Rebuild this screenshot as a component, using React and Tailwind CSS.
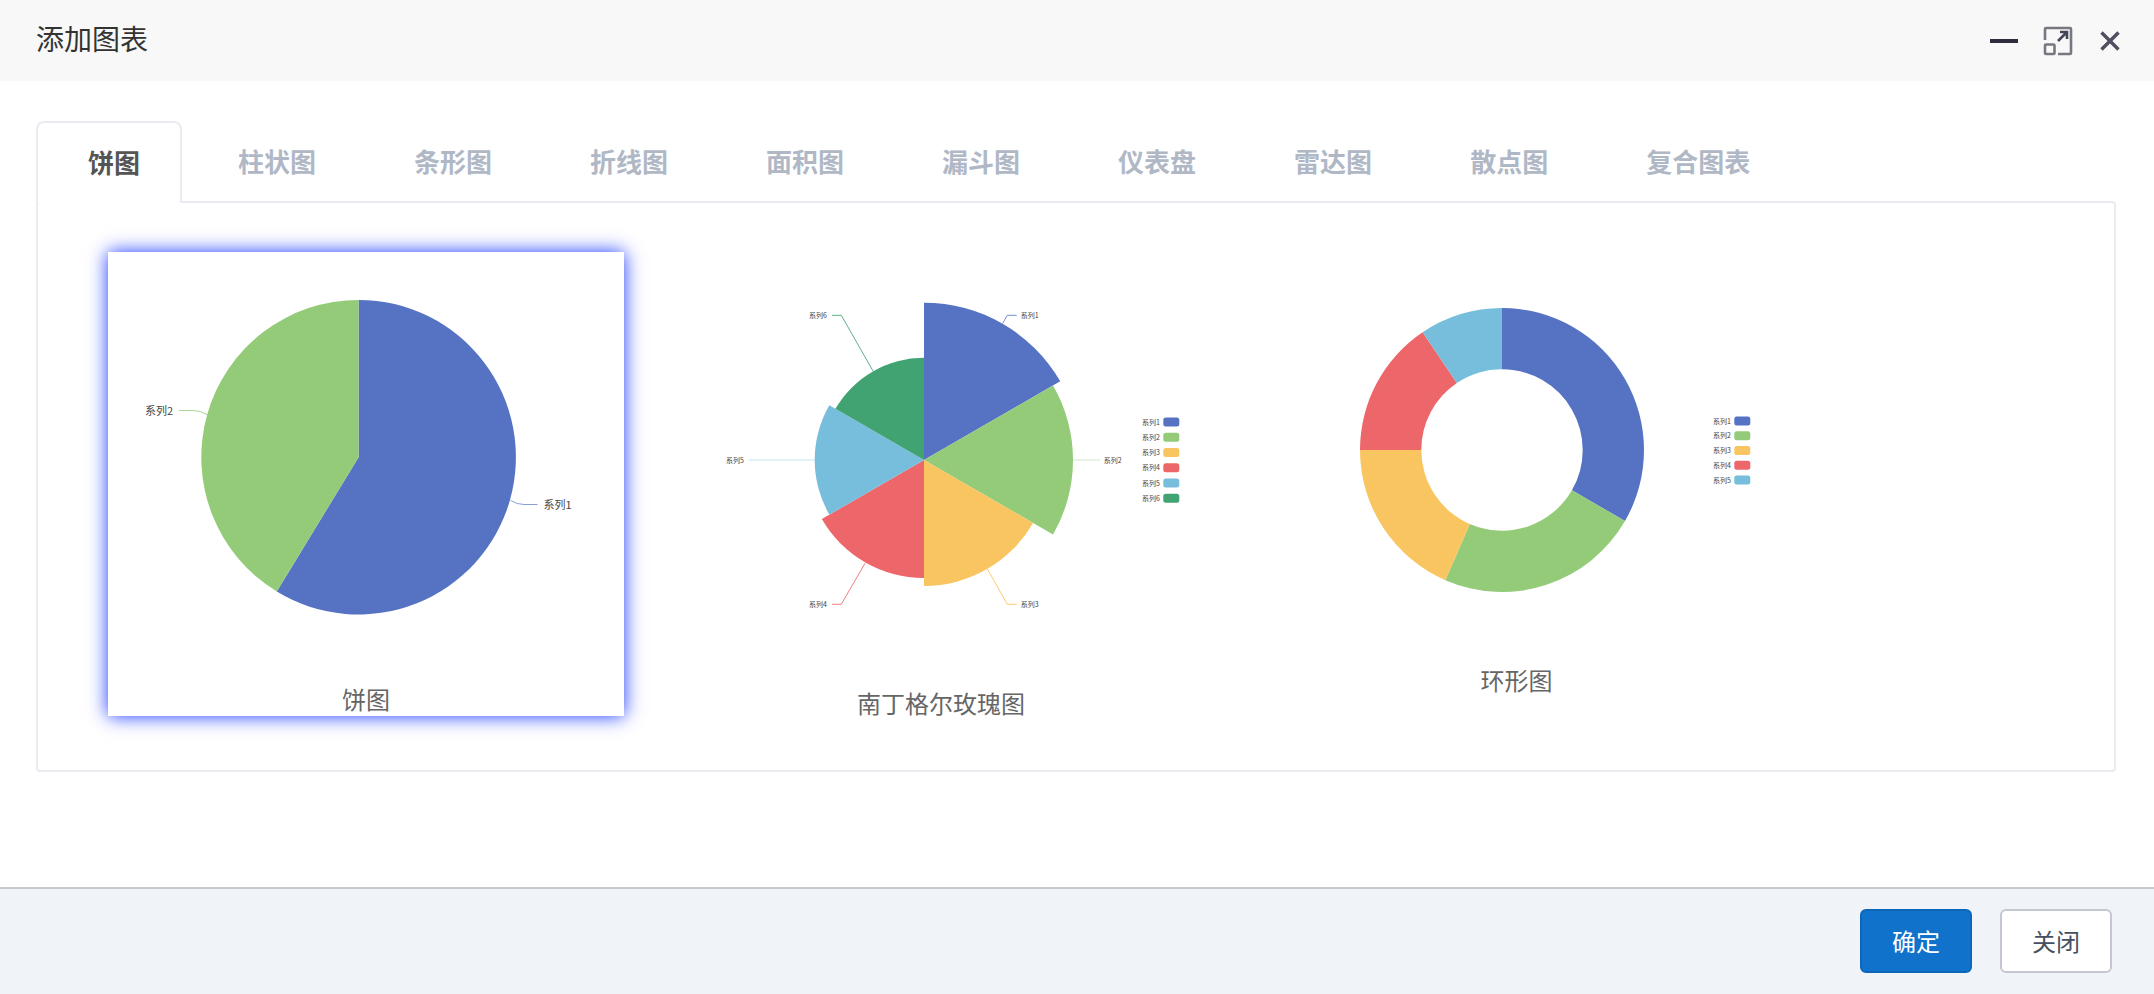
import React from "react";

const BLUE = "#5673c3", GREEN = "#94cb78", YELLOW = "#f9c560", RED = "#ec666a", SKY = "#76bedb", TEAL = "#41a372";

function sector(cx, cy, r, a0, a1) {
  const p = (a, rad) => [cx + rad * Math.sin((a * Math.PI) / 180), cy - rad * Math.cos((a * Math.PI) / 180)];
  const [x0, y0] = p(a0, r), [x1, y1] = p(a1, r);
  return `M${cx} ${cy}L${x0} ${y0}A${r} ${r} 0 ${a1 - a0 > 180 ? 1 : 0} 1 ${x1} ${y1}Z`;
}
function ring(cx, cy, r, ir, a0, a1) {
  const p = (a, rad) => [cx + rad * Math.sin((a * Math.PI) / 180), cy - rad * Math.cos((a * Math.PI) / 180)];
  const [x0, y0] = p(a0, r), [x1, y1] = p(a1, r), [x2, y2] = p(a1, ir), [x3, y3] = p(a0, ir);
  return `M${x0} ${y0}A${r} ${r} 0 0 1 ${x1} ${y1}L${x2} ${y2}A${ir} ${ir} 0 0 0 ${x3} ${y3}Z`;
}

const TABS = ["柱状图", "条形图", "折线图", "面积图", "漏斗图", "仪表盘", "雷达图", "散点图", "复合图表"];

function Legend({ x, items, tops }) {
  return items.map(([name, c], i) => (
    <g key={name}>
      <text x={x - 3.5} y={tops[i] + 2.5} fontSize="7" fill="#444" textAnchor="end">{name}</text>
      <rect x={x} y={tops[i] - 4.5} width="16" height="9" rx="2.5" fill={c} />
    </g>
  ));
}

function PieCard() {
  const cx = 358.6, cy = 456.7, r = 157.3;
  const a = 180 + (Math.atan2(81.8, 134.3) * 180) / Math.PI;
  return (
    <div className="flex h-[464px] w-[516px] flex-col bg-white shadow-[0_0_18px_#1a38ff]">
      <svg className="block h-[431px] w-[516px]" viewBox="108 251.5 516 431">
        <path d={sector(cx, cy, r, 0, a)} fill={BLUE} />
        <path d={sector(cx, cy, r, a, 360)} fill={GREEN} />
        <path d="M510.7 500Q517 504 524 504H537.5" fill="none" stroke={BLUE} strokeOpacity=".7" />
        <path d="M207 414Q200 410 193.6 410H179" fill="none" stroke={GREEN} strokeOpacity=".8" />
        <text x="543.5" y="508" fontSize="11" fill="#444">系列1</text>
        <text x="145" y="414" fontSize="11" fill="#444">系列2</text>
      </svg>
      <div className="h-[32px] text-center text-[24px] leading-[32px] text-[#666]">饼图</div>
    </div>
  );
}

function RoseCard() {
  const cx = 924, cy = 459;
  const rs = [[157.3, BLUE], [149, GREEN], [126, YELLOW], [118, RED], [109.3, SKY], [102.3, TEAL]];
  return (
    <div className="flex w-[516px] flex-col bg-white">
      <svg className="block h-[435px] w-[516px]" viewBox="683 251 516 435">
        {rs.map(([r, c], i) => (
          <path key={i} d={sector(cx, cy, r, i * 60, i * 60 + 60)} fill={c} />
        ))}
        <path d="M1002.7 322.3L1007.3 314.3H1016.7" fill="none" stroke={BLUE} strokeOpacity=".8" />
        <path d="M1073 459H1100" fill="none" stroke={GREEN} strokeOpacity=".4" />
        <path d="M987.3 567.7L1007.3 603.3H1016.7" fill="none" stroke={YELLOW} strokeOpacity=".9" />
        <path d="M865 562.3L841.3 603.3H832" fill="none" stroke={RED} strokeOpacity=".85" />
        <path d="M814.7 459H748.7" fill="none" stroke={SKY} strokeOpacity=".4" />
        <path d="M873 370L841.3 314.3H832" fill="none" stroke={TEAL} strokeOpacity=".85" />
        <g fontSize="7" fill="#444">
          <text x="1020.7" y="317">系列1</text>
          <text x="1103.7" y="461.5">系列2</text>
          <text x="1020.7" y="606">系列3</text>
          <text x="809" y="606">系列4</text>
          <text x="726" y="461.5">系列5</text>
          <text x="809" y="317">系列6</text>
        </g>
        <Legend
          x={1163.3}
          tops={[421, 436.2, 451.5, 466.8, 482, 497.3]}
          items={[["系列1", BLUE], ["系列2", GREEN], ["系列3", YELLOW], ["系列4", RED], ["系列5", SKY], ["系列6", TEAL]]}
        />
      </svg>
      <div className="h-[32px] text-center text-[24px] leading-[32px] text-[#666]">南丁格尔玫瑰图</div>
    </div>
  );
}

function DonutCard() {
  const cx = 1502, cy = 449, r = 142, ir = 80.7;
  const s = [[0, 120, BLUE], [120, 203.5, GREEN], [203.5, 270, YELLOW], [270, 326, RED], [326, 360, SKY]];
  return (
    <div className="flex w-[516px] flex-col bg-white">
      <svg className="block h-[412px] w-[516px]" viewBox="1258 251 516 412">
        {s.map(([a, b, c]) => (
          <path key={a} d={ring(cx, cy, r, ir, a, b)} fill={c} />
        ))}
        <Legend
          x={1734.3}
          tops={[420, 434.8, 449.5, 464.3, 479]}
          items={[["系列1", BLUE], ["系列2", GREEN], ["系列3", YELLOW], ["系列4", RED], ["系列5", SKY]]}
        />
      </svg>
      <div className="h-[32px] pl-[1px] text-center text-[24px] leading-[32px] text-[#666]">环形图</div>
    </div>
  );
}

export default function App() {
  return (
    <div className="flex h-[994px] w-[2154px] flex-col overflow-hidden bg-white font-['Noto_Sans_CJK_SC',sans-serif]">
      <header className="flex h-[81px] shrink-0 items-center justify-between bg-[#f8f8f8] pl-[36px] pr-[34px]">
        <h1 className="pb-[5px] text-[28px] font-normal leading-none text-[#333]">添加图表</h1>
        <div className="flex items-center">
          <div className="h-[4px] w-[28px] bg-[#2d2d3f]" />
          <svg className="ml-[25px] h-[30px] w-[30px]" viewBox="0 0 30 30" fill="none">
            <path d="M2 14V3a1 1 0 0 1 1-1h24a1 1 0 0 1 1 1v24a1 1 0 0 1-1 1H15" stroke="#77777f" strokeWidth="2.6" />
            <rect x="2" y="18.5" width="9.5" height="9.5" rx="1" stroke="#77777f" strokeWidth="2.6" />
            <path d="M15 15L24 6M17 6h7v7" stroke="#45455a" strokeWidth="2.6" />
          </svg>
          <svg className="ml-[27px] h-[20px] w-[20px]" viewBox="0 0 20 20" fill="none">
            <path d="M1.5 1.5L18.5 18.5M18.5 1.5L1.5 18.5" stroke="#4f4f5e" strokeWidth="3.4" />
          </svg>
        </div>
      </header>

      <main className="flex min-h-0 flex-1 flex-col pl-[36px] pr-[38px] pt-[40px]">
        <nav className="relative z-10 flex h-[80px] shrink-0">
          <div className="mb-[-2px] mr-[7px] flex h-[82px] items-center rounded-t-[8px] border-2 border-b-0 border-[#e8ebef] bg-white pb-[4px] pl-[50px] pr-[40px] text-[26px] font-bold text-[#555]">
            饼图
          </div>
          {TABS.map((t) => (
            <div key={t} className="flex items-center px-[49px] pb-[2px] text-[26px] font-bold text-[#b0b8c6]">
              {t}
            </div>
          ))}
        </nav>
        <section className="flex h-[571px] shrink-0 items-start gap-[59px] rounded-[4px] border-2 border-[#e8ebef] pl-[70px] pt-[49px]">
          <PieCard />
          <RoseCard />
          <DonutCard />
        </section>
      </main>

      <footer className="flex h-[107px] shrink-0 items-start justify-end gap-[28px] border-t-2 border-[#c8c9cc] bg-[#f0f3f7] pr-[42px] pt-[20px]">
        <button className="h-[64px] w-[112px] rounded-[6px] border-2 border-[#0e66b8] bg-[#1172cc] text-[24px] text-white">确定</button>
        <button className="h-[64px] w-[112px] rounded-[6px] border-2 border-[#c3c7d0] bg-white text-[24px] text-[#475060]">关闭</button>
      </footer>
    </div>
  );
}
